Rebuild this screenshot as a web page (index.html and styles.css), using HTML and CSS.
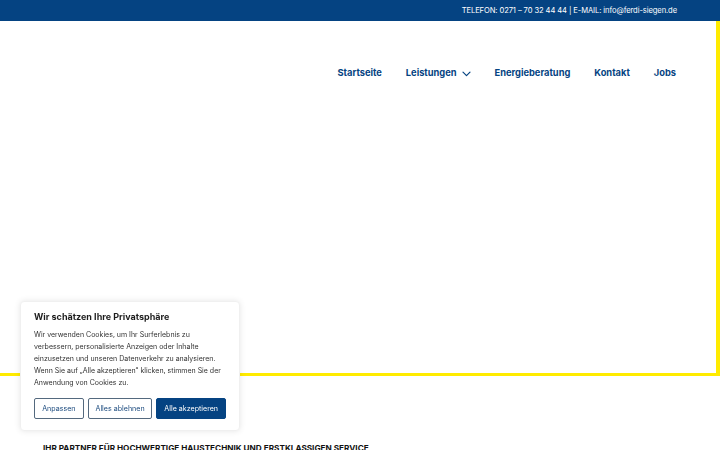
FILE: index.html
```html
<!DOCTYPE html>
<html lang="de">
<head>
<meta charset="utf-8">
<title>Ferdi Siegen</title>
<link rel="stylesheet" href="styles.css">
</head>
<body>
<div class="topbar">
  <span class="topbar-text">TELEFON: 0271 – 70 32 44 44 | E-MAIL: info@ferdi-siegen.de</span>
</div>
<section class="hero">
  <header class="header">
    <nav class="nav">
      <a class="nav-link" href="#">Startseite</a>
      <a class="nav-link" href="#">Leistungen
        <svg class="chev" width="9" height="6" viewBox="0 0 9 6"><path d="M1 1.2l3.5 3.5 3.5-3.5" fill="none" stroke="currentColor" stroke-width="1.2" stroke-linecap="round" stroke-linejoin="round"/></svg>
      </a>
      <a class="nav-link" href="#">Energieberatung</a>
      <a class="nav-link" href="#">Kontakt</a>
      <a class="nav-link" href="#">Jobs</a>
    </nav>
  </header>
</section>
<section class="intro">
  <h2 class="intro-title">IHR PARTNER FÜR HOCHWERTIGE HAUSTECHNIK UND ERSTKLASSIGEN SERVICE</h2>
</section>
<div class="cookie">
  <h3 class="cookie-title">Wir schätzen Ihre Privatsphäre</h3>
  <p class="cookie-text">Wir verwenden Cookies, um Ihr Surferlebnis zu<br>verbessern, personalisierte Anzeigen oder Inhalte<br>einzusetzen und unseren Datenverkehr zu analysieren.<br>Wenn Sie auf „Alle akzeptieren“ klicken, stimmen Sie der<br>Anwendung von Cookies zu.</p>
  <div class="cookie-actions">
    <button class="btn btn-outline btn-a">Anpassen</button>
    <button class="btn btn-outline btn-b">Alles ablehnen</button>
    <button class="btn btn-primary">Alle akzeptieren</button>
  </div>
</div>
</body>
</html>
```
FILE: styles.css
```css
* { box-sizing: border-box; }
html, body { margin: 0; padding: 0; }
body {
  font-family: Inter, "Liberation Sans", sans-serif;
  background: #fff;
  width: 720px;
  height: 450px;
  overflow: hidden;
}
.topbar {
  height: 21px;
  background: #054382;
  display: flex;
  align-items: center;
  justify-content: flex-end;
  padding-right: 43px;
}
.topbar-text {
  color: #fff;
  font-size: 7.6px;
  letter-spacing: -0.1px;
}
.hero {
  height: 355px;
  border-right: 4px solid #ffeb00;
  border-bottom: 3px solid #ffeb00;
}
.header {
  display: flex;
  justify-content: flex-end;
  padding: 46px 40px 0 0;
}
.nav {
  display: flex;
  align-items: center;
  gap: 24px;
}
.nav-link {
  color: #054382;
  font-weight: 700;
  font-size: 9.3px;
  text-decoration: none;
  display: flex;
  align-items: center;
  gap: 5px;
  line-height: 12px;
}
.chev { display: block; margin-top: 1px; }
.intro {
  padding: 67px 0 0 43px;
}
.intro-title {
  margin: 0;
  font-size: 8.2px;
  font-weight: 700;
  color: #111;
  white-space: nowrap;
}
.cookie {
  position: fixed;
  left: 20px;
  top: 301px;
  width: 220px;
  height: 130px;
  background: #fff;
  border-radius: 4px;
  box-shadow: 0 0 6px rgba(0,0,0,0.10);
  border: 1px solid #f0f0f0;
  padding: 8px 13px 0 13px;
}
.cookie-title {
  margin: 0 0 5px 0;
  font-size: 9px;
  font-weight: 700;
  color: #1d1d1d;
  line-height: 14px;
}
.cookie-text {
  margin: 0 0 9px 0;
  font-size: 7px;
  line-height: 12px;
  color: #333;
  white-space: nowrap;
}
.cookie-actions {
  display: flex;
  gap: 4px;
}
.btn {
  font-family: Inter, "Liberation Sans", sans-serif;
  font-size: 7.1px;
  height: 21px;
  padding: 0;
  border-radius: 2px;
  cursor: pointer;
}
.btn-outline {
  background: #fff;
  color: #1b4a7e;
  border: 1.5px solid #54697e;
}
.btn-a { width: 50px; }
.btn-b { width: 65px; }
.btn-primary {
  width: 70px;
  background: #054382;
  color: #fff;
  border: 1.5px solid #054382;
}
```
